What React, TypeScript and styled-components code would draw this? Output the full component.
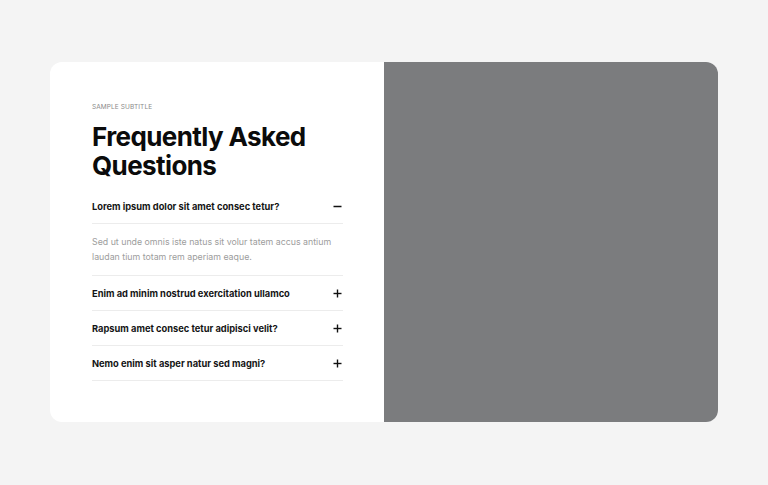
import React, { useState } from 'react';
import styled, { createGlobalStyle } from 'styled-components';

const GlobalStyle = createGlobalStyle`
  html, body {
    margin: 0;
    padding: 0;
    background: #f4f4f4;
    font-family: Inter, "Noto Sans", sans-serif;
  }
`;

const Page = styled.div`
  width: 768px;
  height: 485px;
  display: flex;
  align-items: flex-start;
  justify-content: center;
  padding-top: 62px;
  box-sizing: border-box;
`;

const Card = styled.section`
  width: 668px;
  height: 360px;
  display: grid;
  grid-template-columns: 334px 334px;
  border-radius: 12px;
  overflow: hidden;
  background: #ffffff;
`;

const Content = styled.div`
  padding: 41px 41px 41px 42px;
  display: flex;
  flex-direction: column;
`;

const Subtitle = styled.div`
  font-size: 6.5px;
  line-height: 8px;
  color: #8a8a8a;
  text-transform: uppercase;
  letter-spacing: 0.1px;
  margin-bottom: 11px;
`;

const Title = styled.h2`
  margin: 0 0 9px;
  font-size: 26px;
  line-height: 29px;
  font-weight: 700;
  letter-spacing: -0.6px;
  color: #0b0b0b;
`;

const Item = styled.div`
  border-bottom: 1px solid #ececec;
`;

const Question = styled.button`
  width: 100%;
  height: 34px;
  padding: 0;
  border: 0;
  background: none;
  display: flex;
  align-items: center;
  justify-content: space-between;
  font-family: inherit;
  font-size: 9.3px;
  font-weight: 700;
  color: #141414;
  cursor: pointer;
  text-align: left;
`;

const Answer = styled.p<{ $open: boolean }>`
  display: ${(p) => (p.$open ? 'block' : 'none')};
  margin: 0;
  padding: 10px 0 11px;
  border-top: 1px solid #ececec;
  font-size: 8.8px;
  line-height: 15px;
  color: #9d9d9d;
`;

const Media = styled.div`
  background: #7b7c7e;
`;

const Icon = ({ open }: { open: boolean }) => (
  <svg width="9" height="9" viewBox="0 0 9 9" style={{ marginRight: 1 }}>
    <path d="M0.5 4.5h8" stroke="#111" strokeWidth="1.4" />
    {!open && <path d="M4.5 0.5v8" stroke="#111" strokeWidth="1.4" />}
  </svg>
);

const faqs = [
  {
    q: 'Lorem ipsum dolor sit amet consec tetur?',
    a: 'Sed ut unde omnis iste natus sit volur tatem accus antium laudan tium totam rem aperiam eaque.',
  },
  {
    q: 'Enim ad minim nostrud exercitation ullamco',
    a: 'Sed ut unde omnis iste natus sit volur tatem accus antium laudan tium totam rem aperiam eaque.',
  },
  {
    q: 'Rapsum amet consec tetur adipisci velit?',
    a: 'Sed ut unde omnis iste natus sit volur tatem accus antium laudan tium totam rem aperiam eaque.',
  },
  {
    q: 'Nemo enim sit asper natur sed magni?',
    a: 'Sed ut unde omnis iste natus sit volur tatem accus antium laudan tium totam rem aperiam eaque.',
  },
];

const App: React.FC = () => {
  const [open, setOpen] = useState(0);
  return (
    <>
      <GlobalStyle />
      <Page>
        <Card>
          <Content>
            <Subtitle>Sample Subtitle</Subtitle>
            <Title>
              Frequently Asked
              <br />
              Questions
            </Title>
            {faqs.map((f, i) => (
              <Item key={i}>
                <Question onClick={() => setOpen(open === i ? -1 : i)}>
                  {f.q}
                  <Icon open={open === i} />
                </Question>
                <Answer $open={open === i}>{f.a}</Answer>
              </Item>
            ))}
          </Content>
          <Media />
        </Card>
      </Page>
    </>
  );
};

export default App;
